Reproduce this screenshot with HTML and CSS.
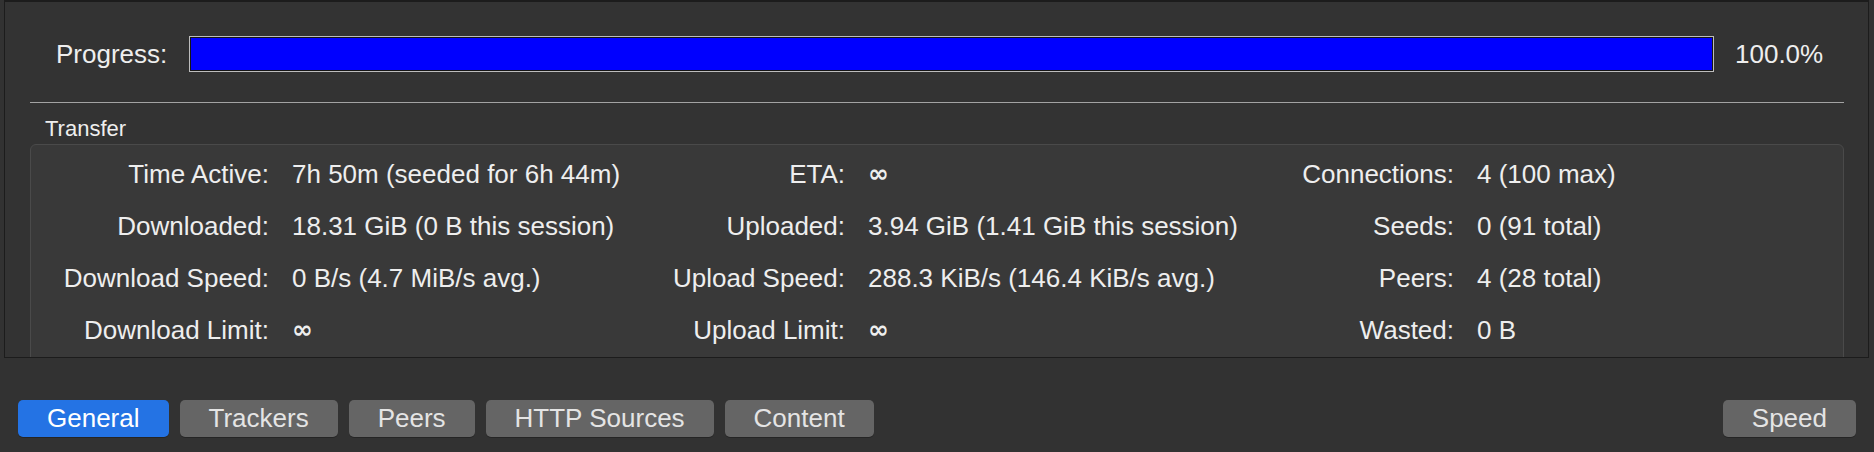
FILE: index.html
```html
<!DOCTYPE html>
<html lang="en">
<head>
<meta charset="utf-8">
<title>Torrent properties</title>
<link rel="stylesheet" href="styles.css">
</head>
<body>
<div class="window">
  <div class="frame">
    <div class="progress-row">
      <span class="progress-label">Progress:</span>
      <div class="bar"><div class="bar-fill" style="width:100%"></div></div>
      <span class="pct">100.0%</span>
    </div>
    <div class="separator"></div>
    <div class="group-title">Transfer</div>
    <div class="group">
      <div class="grid">
        <span class="lbl">Time Active:</span><span class="val">7h 50m (seeded for 6h 44m)</span>
        <span class="lbl">ETA:</span><span class="val inf">∞</span>
        <span class="lbl">Connections:</span><span class="val">4 (100 max)</span>

        <span class="lbl">Downloaded:</span><span class="val">18.31 GiB (0 B this session)</span>
        <span class="lbl">Uploaded:</span><span class="val">3.94 GiB (1.41 GiB this session)</span>
        <span class="lbl">Seeds:</span><span class="val">0 (91 total)</span>

        <span class="lbl">Download Speed:</span><span class="val">0 B/s (4.7 MiB/s avg.)</span>
        <span class="lbl">Upload Speed:</span><span class="val">288.3 KiB/s (146.4 KiB/s avg.)</span>
        <span class="lbl">Peers:</span><span class="val">4 (28 total)</span>

        <span class="lbl">Download Limit:</span><span class="val inf">∞</span>
        <span class="lbl">Upload Limit:</span><span class="val inf">∞</span>
        <span class="lbl">Wasted:</span><span class="val">0 B</span>
      </div>
    </div>
  </div>
  <div class="tabs">
    <button class="tab active">General</button>
    <button class="tab">Trackers</button>
    <button class="tab">Peers</button>
    <button class="tab">HTTP Sources</button>
    <button class="tab">Content</button>
    <button class="tab speed">Speed</button>
  </div>
</div>
</body>
</html>
```

FILE: styles.css
```css
* { box-sizing: border-box; }

html, body {
  margin: 0;
  padding: 0;
  background: #323232;
}

body {
  width: 1874px;
  height: 452px;
  overflow: hidden;
  font-family: "Liberation Sans", Arial, sans-serif;
  font-size: 26px;
  color: #eeeeee;
}

.window {
  width: 1874px;
  height: 452px;
  display: flex;
  flex-direction: column;
}

.frame {
  margin-left: 4px;
  width: 1865px;
  height: 358px;
  border: 1px solid #1c1c1c;
  border-top-width: 2px;
  background: #333333;
  overflow: hidden;
  display: flex;
  flex-direction: column;
}

.progress-row {
  margin-top: 34px;
  height: 36px;
  padding: 0 29px 0 51px;
  display: flex;
  align-items: center;
}

.progress-label {
  line-height: 36px;
  margin-right: 22px;
  white-space: nowrap;
}

.bar {
  flex: 1;
  height: 36px;
  border: 1px solid #bdbdbd;
  background: #0000ff;
  box-shadow: inset 0 0 0 1px #161616;
  padding: 1px;
}

.bar-fill {
  height: 100%;
  background: #0000ff;
}

.pct {
  width: 104px;
  margin-left: 21px;
  line-height: 36px;
  white-space: nowrap;
}

.separator {
  margin: 30px 24px 0 25px;
  height: 1px;
  background: #a3a3a3;
  flex-shrink: 0;
}

.group-title {
  margin: 13px 0 0 40px;
  font-size: 22px;
  line-height: 26px;
  height: 26px;
  flex-shrink: 0;
}

.group {
  margin: 2px 24px 0 25px;
  border: 1px solid #4a4a4a;
  border-radius: 6px;
  background: #393939;
  padding: 3px 0 20px 0;
  flex-shrink: 0;
}

.grid {
  display: grid;
  grid-template-columns: 261px 348px 228px 382px 227px 1fr;
  grid-auto-rows: 52px;
  line-height: 52px;
  white-space: nowrap;
}

.lbl {
  text-align: right;
  padding-right: 23px;
}

.val {
  text-align: left;
}

.val.inf {
  font-family: "DejaVu Sans", sans-serif;
  font-weight: bold;
  font-size: 25px;
}

.tabs {
  margin-top: 42px;
  padding: 0 18px;
  display: flex;
  gap: 11px;
}

.tab {
  height: 37px;
  padding: 0 29px;
  border: none;
  border-radius: 5px;
  background: #656565;
  color: #e4e4e4;
  font-family: "Liberation Sans", Arial, sans-serif;
  font-size: 26px;
  line-height: 37px;
  white-space: nowrap;
  box-shadow: 0 1px 0 rgba(0, 0, 0, 0.25);
}

.tab.active {
  background: #2473e4;
  color: #ffffff;
}

.tab.speed {
  margin-left: auto;
}
```
